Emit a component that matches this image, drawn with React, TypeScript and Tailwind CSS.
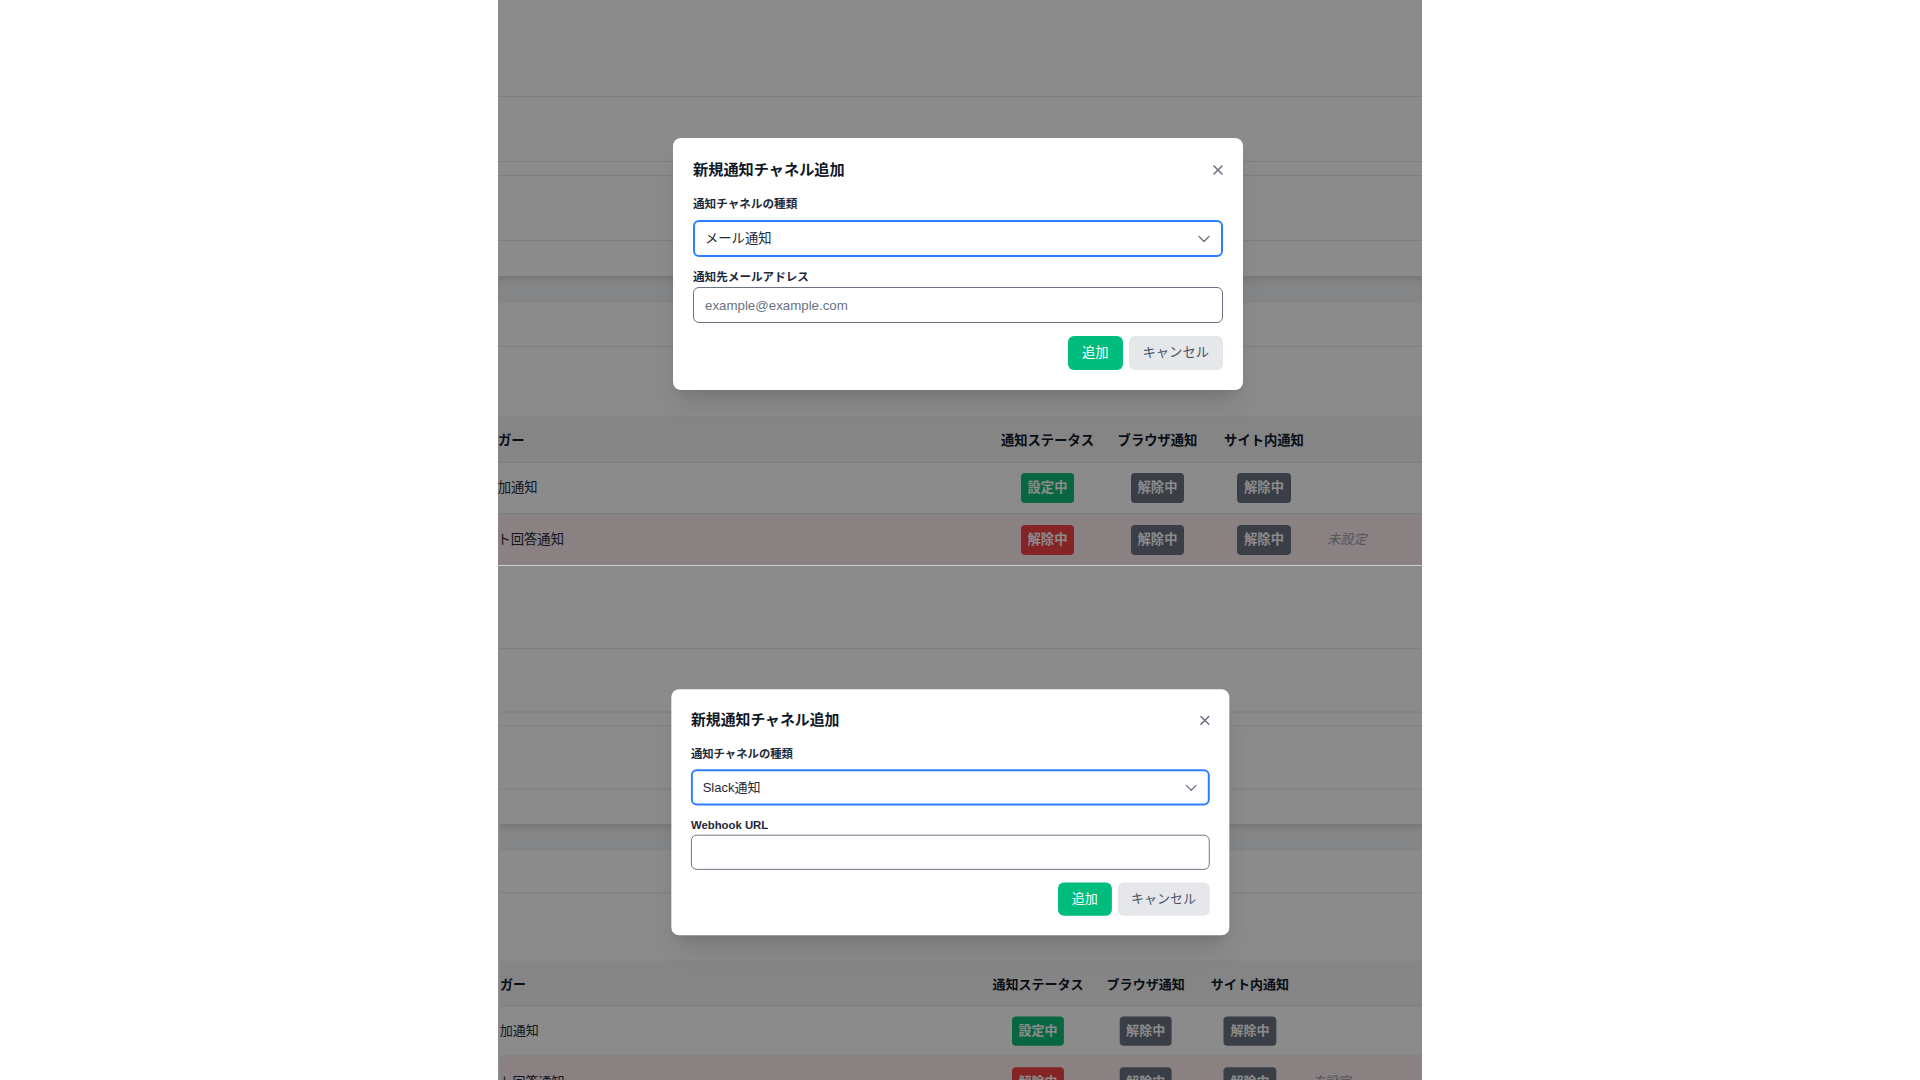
import { ChevronDown, X } from "lucide-react";

type Tone = "green" | "red" | "gray";

const toneClass: Record<Tone, string> = {
  green: "bg-[#10bd78]",
  red: "bg-[#f24242]",
  gray: "bg-gray-500",
};

function Badge({ tone, children }: { tone: Tone; children: string }) {
  return (
    <span
      className={`inline-block rounded px-[7px] py-[5px] text-[13.3px] leading-5 font-bold text-white ${toneClass[tone]}`}
    >
      {children}
    </span>
  );
}

const rows = [
  {
    name: "ユーザ追加通知",
    status: { label: "設定中", tone: "green" as Tone },
    note: "",
    bg: "bg-white",
  },
  {
    name: "アンケート回答通知",
    status: { label: "解除中", tone: "red" as Tone },
    note: "未設定",
    bg: "bg-[#fdeeee]",
  },
];

function TriggerTable({ wide }: { wide?: boolean }) {
  const lastCol = wide ? "w-[123px]" : "w-[103px]";
  return (
    <div className="text-[13.3px]">
      {/* header */}
      <div className="flex h-[47px] items-center border-b border-gray-200 bg-[#f4f4f5] pt-[3px] font-bold text-gray-900">
        <div className="flex-1 whitespace-nowrap">
          <span className="-ml-[53.2px]">通知トリガー</span>
        </div>
        <div className="w-[117px] text-center">通知ステータス</div>
        <div className="w-[103px] text-center">ブラウザ通知</div>
        <div className="w-[110px] text-center">サイト内通知</div>
        <div className={lastCol} />
      </div>
      {rows.map((r, i) => (
        <div
          key={r.name}
          className={`flex h-[51px] items-center text-gray-800 ${r.bg} ${i === 0 ? "border-b border-gray-200" : ""}`}
        >
          <div className="flex-1 whitespace-nowrap">
            <span className="-ml-[53.2px]">{r.name}</span>
          </div>
          <div className="flex w-[117px] justify-center">
            <Badge tone={r.status.tone}>{r.status.label}</Badge>
          </div>
          <div className="flex w-[103px] justify-center">
            <Badge tone="gray">解除中</Badge>
          </div>
          <div className="flex w-[110px] justify-center">
            <Badge tone="gray">解除中</Badge>
          </div>
          <div className={`${lastCol} pl-[8px] text-gray-400 italic`}>{r.note}</div>
        </div>
      ))}
    </div>
  );
}

function ChannelDialog({
  channel,
  fieldLabel,
  placeholder,
}: {
  channel: string;
  fieldLabel: string;
  placeholder?: string;
}) {
  return (
    <div className="w-[570px] rounded-lg bg-white p-5 shadow-xl">
      <div className="flex h-[23px] items-center justify-between">
        <h2 className="text-[15.2px] leading-[23px] font-bold text-gray-900">新規通知チャネル追加</h2>
        <X className="-mr-[3px] h-4 w-4 text-gray-500" strokeWidth={2.4} />
      </div>

      <label className="mt-[15px] block text-[11.6px] leading-4 font-semibold text-gray-800">
        通知チャネルの種類
      </label>
      <div className="relative mt-2">
        <select
          defaultValue={channel}
          className="h-[37px] w-full appearance-none rounded-md border-2 border-blue-500 bg-white pl-[10px] text-[13.3px] text-gray-800 outline-none"
        >
          <option>メール通知</option>
          <option>Slack通知</option>
        </select>
        <ChevronDown
          className="pointer-events-none absolute top-1/2 right-[9px] h-5 w-5 -translate-y-1/2 text-gray-500"
          strokeWidth={1.5}
        />
      </div>

      <label className="mt-3 block text-[11.6px] leading-4 font-semibold text-gray-800">{fieldLabel}</label>
      <input
        type="text"
        placeholder={placeholder}
        className="mt-0.5 h-9 w-full rounded-md border border-gray-500 bg-white pl-[11px] text-[13.3px] text-gray-800 outline-none placeholder:text-gray-500"
      />

      <div className="mt-[13px] flex justify-end gap-1.5">
        <button className="h-[34px] rounded-md bg-emerald-500 px-3.5 text-[13.3px] text-white">追加</button>
        <button className="h-[34px] rounded-md bg-gray-200 px-3.5 text-[13.3px] text-gray-600">キャンセル</button>
      </div>
    </div>
  );
}

function Screen({ wide, children }: { wide?: boolean; children: React.ReactNode }) {
  return (
    <div className={`relative h-[565px] overflow-hidden bg-white ${wide ? "w-[944px]" : "w-[924px]"}`}>
      {/* page behind the modal */}
      <div className="h-[97px] border-b border-gray-200" />
      <div className="h-[65px] border-b border-gray-200" />
      <div className="h-[14px] border-b border-gray-200" />
      <div className="h-[65px] border-b border-gray-200" />
      <div className="h-[35px]" />
      <div className="h-[27px] bg-gray-100 shadow-[inset_0_8px_8px_-6px_rgba(0,0,0,0.14)]" />
      <div className="h-[44px] border-b border-gray-200" />
      <div className="h-[69px]" />
      <TriggerTable wide={wide} />

      {/* modal */}
      <div className="absolute inset-0 bg-black/[0.455]" />
      <div className="absolute top-0 bottom-0 left-0 flex w-[924px] items-start justify-center pt-[138px] pr-[4px]">
        {children}
      </div>
    </div>
  );
}

export default function App() {
  return (
    <div className="flex min-h-screen justify-center bg-white font-['Liberation_Sans','Noto_Sans_CJK_JP',sans-serif]">
      <div className="w-[924px]">
        <div className="h-[565px] overflow-hidden">
          <Screen>
            <ChannelDialog channel="メール通知" fieldLabel="通知先メールアドレス" placeholder="example@example.com" />
          </Screen>
        </div>
        <div className="h-px bg-[#cfcfcf]" />
        <div className="h-[514px] overflow-hidden bg-[#8b8b8b]">
          <div className="origin-top-left translate-x-[2px] -translate-y-[11.7px] scale-x-[0.979] scale-y-[0.977]">
            <Screen wide>
              <ChannelDialog channel="Slack通知" fieldLabel="Webhook URL" />
            </Screen>
          </div>
        </div>
      </div>
    </div>
  );
}
